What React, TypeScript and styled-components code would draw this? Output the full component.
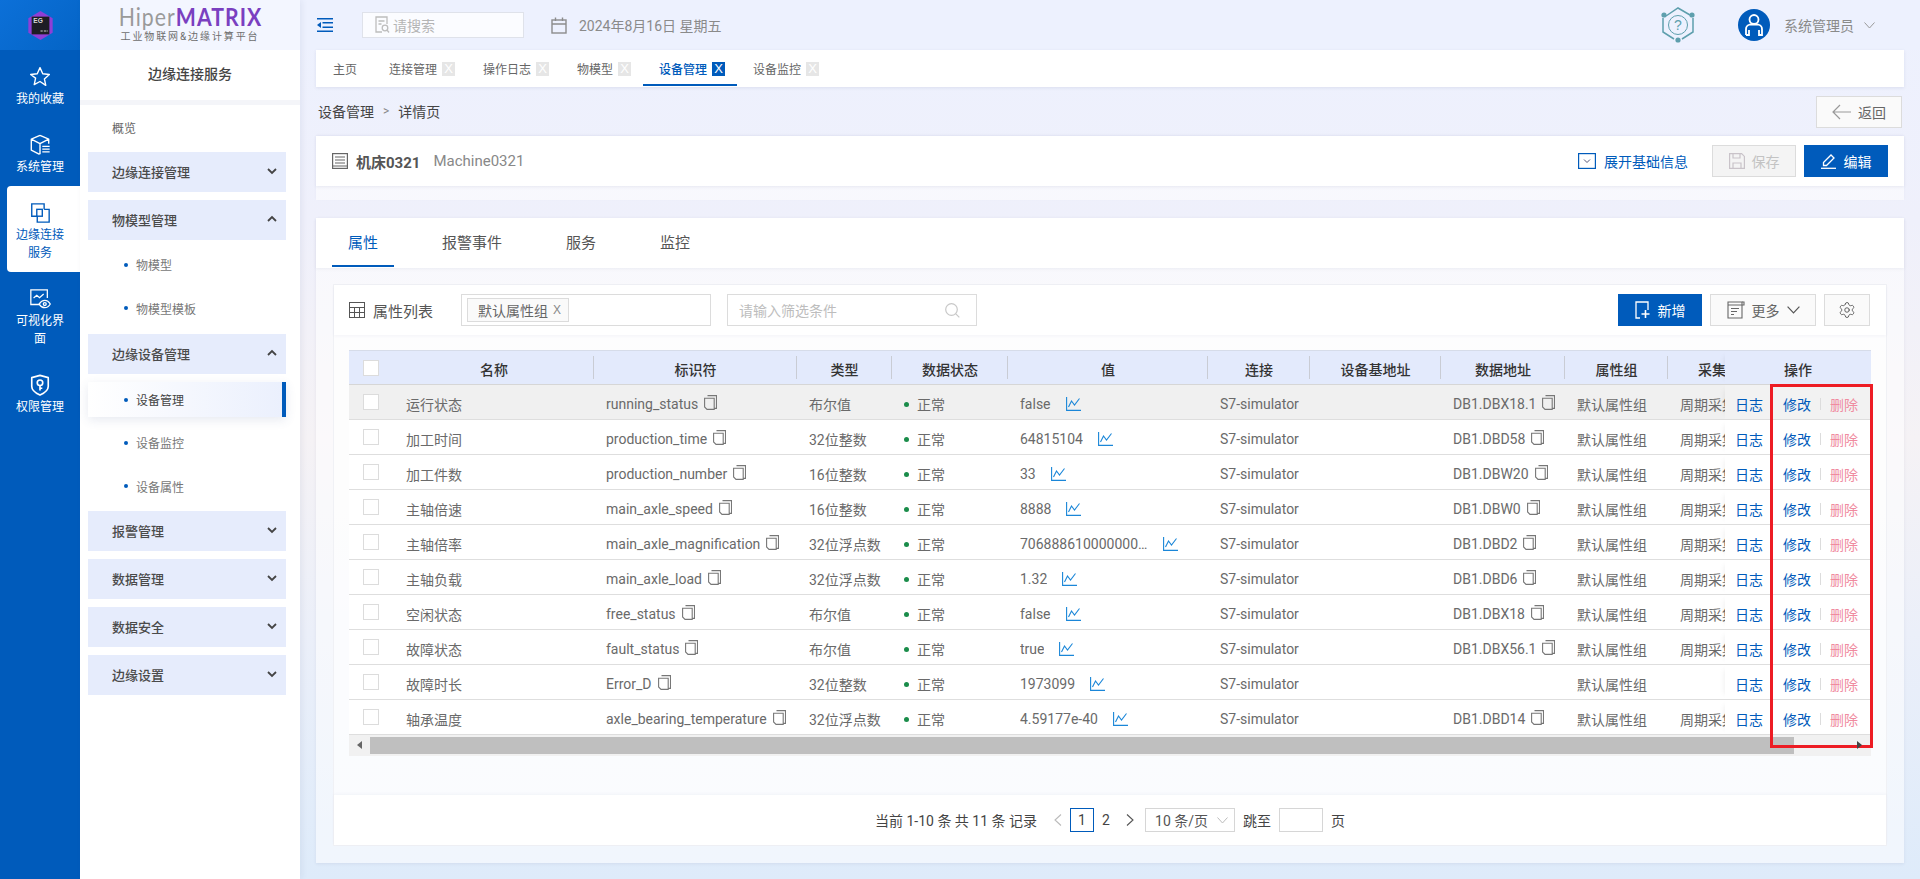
import React from "react";
import styled, { createGlobalStyle } from "styled-components";
import { Settings } from "lucide-react";

const Global = createGlobalStyle`
  * { box-sizing: border-box; }
  html, body { margin: 0; padding: 0; height: 100%; }
  body { font-family: Roboto, "Noto Sans CJK SC", sans-serif; font-size: 14px; color: #666; overflow: hidden; }
`;

const BLUE = "#005bbb";

const Page = styled.div`
  display: flex; width: 1920px; height: 879px; overflow: hidden;
  background: linear-gradient(180deg, #edf1fe 0%, #eff0fb 25%, #f5f2f5 50%, #ebeff9 72%, #deebfa 100%);
`;

/* rail */
const Rail = styled.nav`
  width: 80px; flex: none; background: ${BLUE}; display: flex; flex-direction: column;
`;
const RailLogo = styled.div`
  height: 50px; display: flex; align-items: center; justify-content: center;
  background: linear-gradient(135deg, #0c70d8, #0464c6);
`;
const RailItem = styled.div<{ $active?: boolean }>`
  margin-left: ${p => (p.$active ? "7px" : "0")};
  padding: 16px ${p => (p.$active ? "16px" : "15px")} 10px ${p => (p.$active ? "9px" : "15px")};
  min-height: 68px;
  display: flex; flex-direction: column; align-items: center;
  font-size: 12px; line-height: 18px; text-align: center;
  color: ${p => (p.$active ? BLUE : "#fff")};
  background: ${p => (p.$active ? "#fff" : "transparent")};
  border-radius: ${p => (p.$active ? "4px 0 0 4px" : "0")};
  svg { height: 22px; width: 24px; margin-bottom: 2px; flex: none; }
`;

/* sidebar */
const Side = styled.aside`
  width: 220px; flex: none; background: #fff; display: flex; flex-direction: column;
  box-shadow: 2px 0 6px rgba(60, 80, 120, .08); position: relative; z-index: 1;
`;
const Brand = styled.div`
  height: 50px; background: #f3f6ff; display: flex; flex-direction: column; align-items: center; padding-top: 3px;
`;
const BrandName = styled.div`
  font-family: "Lato", sans-serif; font-size: 25px; line-height: 27px; letter-spacing: 1.2px; color: #9a9a9a; white-space: nowrap;
  transform: scaleX(.85);
  b { font-weight: 700; color: #7a3fc0; }
`;
const BrandSub = styled.div`
  font-size: 10px; line-height: 14px; letter-spacing: 1.9px; color: #6e6e6e; white-space: nowrap;
`;
const SideTitle = styled.div`
  height: 55px; padding-bottom: 5px; border-bottom: 5px solid #f4f5f9; display: flex; align-items: center; justify-content: center;
  font-size: 14px; font-weight: 500; color: #444;
`;
const Overview = styled.div`
  height: 47px; padding: 0 0 3px 32px; display: flex; align-items: center; font-size: 12px; color: #666;
`;
const SideList = styled.div`
  padding: 0 14px 0 8px; display: flex; flex-direction: column;
`;
const Group = styled.div`
  height: 40px; background: #e6ecfc; margin-bottom: 8px; padding: 0 9px 2px 24px;
  display: flex; align-items: center; justify-content: space-between;
  font-size: 13px; font-weight: 500; color: #4a4a4a;
  svg { flex: none; }
`;
const SubList = styled.div<{ $top: number; $bottom: number }>`
  margin: ${p => p.$top}px 0 ${p => p.$bottom}px; display: flex; flex-direction: column;
`;
const SubItem = styled.div<{ $active?: boolean }>`
  height: ${p => (p.$active ? "35px" : "43.5px")};
  margin-bottom: ${p => (p.$active ? "4px" : "0")};
  display: flex; align-items: center; gap: 8px; padding-left: 36px;
  font-size: 12px; color: ${p => (p.$active ? "#444" : "#777")};
  position: relative;
  background: ${p => (p.$active ? "linear-gradient(90deg, #fff, #ebf0fd)" : "transparent")};
  border-right: ${p => (p.$active ? `4px solid ${BLUE}` : "0")};
  box-shadow: ${p => (p.$active ? "0 3px 10px rgba(60, 80, 140, .12)" : "none")};
  &::before { content: ""; width: 4px; height: 4px; border-radius: 50%; background: ${BLUE}; }
`;

/* main */
const Main = styled.main`
  flex: 1; min-width: 0; padding: 0 16px; display: flex; flex-direction: column;
`;
const TopBar = styled.header`
  height: 50px; display: flex; align-items: center; margin: 0 -16px; padding: 0 45px 0 17px; background: #edf1fe;
`;
const SearchBox = styled.div`
  width: 162px; height: 26px; margin-left: 29px; border: 1px solid #dfe2ea; background: #fbfcff;
  display: flex; align-items: center; gap: 3px; padding-left: 12px; font-size: 14px; color: #b5b5b5;
`;
const DateText = styled.div`
  margin-left: 27px; display: flex; align-items: center; gap: 12px; font-size: 14px; color: #8a8a8a;
`;
const TopRight = styled.div`
  margin-left: auto; display: flex; align-items: center;
`;
const UserName = styled.span`
  margin: 0 10px 0 14px; font-size: 14px; color: #8a8a8a;
`;
const TabsBar = styled.div`
  height: 37px; background: #fff; display: flex; box-shadow: 0 1px 3px rgba(80, 90, 130, .12); padding-left: 1px;
`;
const TabItem = styled.div<{ $active?: boolean; $closable?: boolean }>`
  height: 36px; padding: 3px ${p => (p.$closable ? "12px" : "16px")} 0 16px; display: flex; align-items: center; gap: 5px; font-size: 12px;
  color: ${p => (p.$active ? BLUE : "#666")}; font-weight: ${p => (p.$active ? 500 : 400)};
  border-bottom: 2px solid ${p => (p.$active ? BLUE : "transparent")};
`;
const TabClose = styled.span<{ $active?: boolean }>`
  width: 13px; height: 14px; display: flex; align-items: center; justify-content: center; font-size: 13px; line-height: 1;
  font-family: "Liberation Sans", sans-serif; font-weight: 400;
  background: ${p => (p.$active ? BLUE : "#e6e6e6")}; color: #fff;
`;
const CrumbRow = styled.div`
  height: 49px; display: flex; align-items: center; justify-content: space-between; padding: 0 2px; font-size: 14px; color: #444;
`;
const Crumb = styled.div`
  display: flex; gap: 9px; align-items: center; padding-bottom: 2px;
  i { font-style: normal; color: #888; font-size: 12px; }
`;
const BackButton = styled.div`
  width: 86px; height: 32px; border: 1px solid #dcdcdc; background: #fafafa; display: flex; align-items: center; justify-content: center; gap: 7px; font-size: 14px; color: #666;
`;
const DetailCard = styled.section`
  height: 64px; background: rgba(255, 255, 255, .55); margin-bottom: 18px; box-shadow: 0 -1px 2px rgba(80, 90, 130, .06);
`;
const DetailHead = styled.div`
  height: 50px; background: #fff; box-shadow: 0 1px 3px rgba(80, 90, 130, .1); display: flex; align-items: center; padding: 0 16px;
`;
const DetailName = styled.span`
  margin-left: 8px; font-size: 15px; font-weight: 700; color: #555;
`;
const DetailCode = styled.span`
  margin-left: 13px; font-size: 15px; color: #888;
`;
const Expand = styled.div`
  margin-left: auto; display: flex; align-items: center; gap: 8px; color: ${BLUE}; font-size: 14px; margin-right: 24px;
`;
const ActionButton = styled.div<{ $variant: "primary" | "disabled" | "ghost"; $width?: number }>`
  height: 32px; width: ${p => p.$width ?? 84}px;
  display: flex; align-items: center; justify-content: center; gap: 7px; font-size: 14px; font-weight: 400;
  background: ${p => (p.$variant === "primary" ? BLUE : p.$variant === "disabled" ? "#f4f4f4" : "#fafafa")};
  color: ${p => (p.$variant === "primary" ? "#fff" : p.$variant === "disabled" ? "#c3c3c3" : "#666")};
  border: ${p => (p.$variant === "primary" ? "0" : "1px solid #dcdcdc")};
  & + & { margin-left: 8px; }
`;
const OuterCard = styled.section`
  height: 645px; background: rgba(255, 255, 255, .55); padding-bottom: 17px; box-shadow: 0 1px 3px rgba(80, 90, 130, .1); display: flex; flex-direction: column;
`;
const OuterTabs = styled.div`
  height: 50px; flex: none; background: #fff; box-shadow: 0 1px 3px rgba(80, 90, 130, .08); display: flex; padding-left: 16px; gap: 32px; margin-bottom: 16px;
`;
const OuterTab = styled.div<{ $active?: boolean }>`
  height: 49px; padding: 0 16px; display: flex; align-items: center; font-size: 15px;
  color: ${p => (p.$active ? BLUE : "#555")};
  border-bottom: 2px solid ${p => (p.$active ? BLUE : "transparent")};
`;
const InnerCard = styled.div`
  flex: 1; margin: 0 17px; border: 1px solid #f0f1f5; background: rgba(255, 255, 255, .6); display: flex; flex-direction: column;
`;
const InnerHead = styled.div`
  height: 50px; flex: none; background: #fff; display: flex; align-items: center; padding: 0 16px 0 15px; box-shadow: 0 1px 3px rgba(80, 90, 130, .06);
`;
const InnerTitle = styled.span`
  margin-left: 8px; font-size: 15px; color: #555; width: 88px;
`;
const GroupSelect = styled.div`
  width: 250px; height: 32px; border: 1px solid #dcdcdc; display: flex; align-items: center; padding-left: 5px;
`;
const Tag = styled.div`
  height: 24px; padding: 0 7px 0 10px; border: 1px solid #dcdcdc; background: #fafafa; display: flex; align-items: center; gap: 5px; font-size: 14px; color: #666;
  span { font-family: "Liberation Sans", sans-serif; font-size: 12px; color: #888; }
`;
const FilterBox = styled.div`
  width: 250px; height: 32px; margin-left: 16px; border: 1px solid #dcdcdc; display: flex; align-items: center; justify-content: space-between; padding: 0 16px 0 11px; font-size: 14px; color: #bdbdbd;
`;
const HeadActions = styled.div`
  margin-left: auto; display: flex; align-items: center;
`;
const TableWrap = styled.div`
  margin: 15px 15px 0; position: relative; flex: none;
`;
const cols = "45px 200px 203px 95px 116px 200px 102px 131px 124px 103px 57px 146px";
const HeadRow = styled.div`
  display: grid; grid-template-columns: ${cols}; height: 35px; background: #e3eafc; border-top: 1px solid #d6dce9; border-bottom: 1px solid #d6d6d6;
`;
const HeadCell = styled.div<{ $sep?: boolean; $clip?: boolean }>`
  display: flex; align-items: center; justify-content: ${p => (p.$clip ? "flex-start" : "center")};
  padding: 2px 0 0 ${p => (p.$clip ? "30px" : "0")};
  overflow: hidden; white-space: nowrap; font-size: 14px; font-weight: 500; color: #333; position: relative;
  &::after { content: ${p => (p.$sep ? '""' : "none")}; position: absolute; right: 0; top: 5px; bottom: 5px; width: 1px; background: #c9ccd4; }
`;
const Row = styled.div<{ $hover?: boolean }>`
  display: grid; grid-template-columns: ${cols}; height: 35px; border-bottom: 1px solid #dedede;
  background: ${p => (p.$hover ? "#f0f0f0" : "#fff")};
`;
const Cell = styled.div`
  display: flex; align-items: center; gap: 6px; padding: 4px 0 0 12px; overflow: hidden; white-space: nowrap; font-size: 14px; color: #6a6a6a; font-weight: 400;
`;
const ValueText = styled.span`
  display: inline-block; max-width: 128px; overflow: hidden; text-overflow: ellipsis; margin-right: 9px;
`;
const Check = styled.span`
  width: 16px; height: 16px; border: 1px solid #dcdcdc; background: #fff; display: block; margin-left: 14px; flex: none;
`;
const CheckCell = styled.div`
  display: flex; align-items: center;
`;
const Dot = styled.span`
  width: 5px; height: 5px; border-radius: 50%; background: #1a8c4a; flex: none; margin-right: 2px;
`;
const OpCell = styled.div<{ $hover?: boolean }>`
  display: flex; align-items: center; padding: 4px 0 0 10px; font-size: 14px; background: ${p => (p.$hover ? "#f2f2f2" : "#fff")};
  box-shadow: -5px 0 6px -5px rgba(0, 0, 0, .08); position: relative; white-space: nowrap;
`;
const OpLink = styled.span<{ $danger?: boolean }>`
  color: ${p => (p.$danger ? "#f08ba0" : BLUE)};
`;
const OpSep = styled.i<{ $wide?: boolean }>`
  width: 1px; height: 12px; background: #dcdcdc; margin: 0 ${p => (p.$wide ? "10px" : "9px")} 0 9px;
`;
const OpHead = styled(HeadCell)`
  background: #e3eafc; box-shadow: -5px 0 6px -5px rgba(0, 0, 0, .08);
`;
const ScrollBar = styled.div`
  height: 21px; background: #f1f1f1; display: flex; align-items: center; position: relative;
`;
const ScrollThumb = styled.div`
  margin-left: 21px; width: 1424px; height: 17px; background: #bfbfbf;
`;
const ArrowLeft = styled.span`
  position: absolute; left: 8px; top: 6px; border: 4.5px solid transparent; border-left: 0; border-right: 5px solid #666;
`;
const ArrowRight = styled.span`
  position: absolute; right: 9px; top: 6px; border: 4.5px solid transparent; border-right: 0; border-left: 5px solid #444; z-index: 3;
`;
const RedMark = styled.div`
  position: absolute; right: -2px; top: 34px; width: 103px; height: 364px; border: 3px solid #ed1c24; pointer-events: none; z-index: 2;
`;
const Footer = styled.div`
  margin-top: auto; height: 50px; background: #fff; display: flex; align-items: center; justify-content: center; font-size: 14px; color: #444; box-shadow: 0 -1px 3px rgba(80, 90, 130, .05);
`;
const PageNum = styled.span<{ $active?: boolean }>`
  width: 24px; height: 24px; display: flex; align-items: center; justify-content: center;
  border: ${p => (p.$active ? `1px solid ${BLUE}` : "0")};
`;
const PageSelect = styled.div`
  width: 90px; height: 24px; border: 1px solid #d6d6d6; display: flex; align-items: center; justify-content: space-between; padding: 0 6px 0 9px; color: #555; margin: 0 8px 0 3px;
`;
const PageInput = styled.div`
  width: 44px; height: 24px; border: 1px solid #d6d6d6; margin: 0 8px;
`;
const PageNote = styled.span`
  margin-right: 9px; white-space: nowrap;
`;
const PageArrow = styled.span`
  width: 24px; display: flex; justify-content: center; align-items: center;
`;

/* icons */
const Line = { fill: "none", stroke: "currentColor" } as const;

const RailBadge = () => (
  <svg width="31" height="31" viewBox="0 0 28 28">
    <polygon points="14,1 25,7.5 25,20.5 14,27 3,20.5 3,7.5" fill="#8e3fd6" />
    <rect x="6" y="6" width="16" height="16" fill="#1d1d24" />
    <text x="7.500" y="12" fontSize="6" fontWeight="700" fill="#d8d8d8" fontFamily="Liberation Sans">EG</text>
    <path d="M14 19h2M17 19h2M19.500 19h1" stroke="#cfcfcf" strokeWidth="1" />
  </svg>
);
const StarIcon = () => (
  <svg viewBox="0 0 24 24" {...Line} strokeWidth="1.5" strokeLinejoin="round"><path d="M12 1.8l3 6.7 7.2.8-5.4 4.8 1.5 7.1L12 16.9 5.7 20.3l1.5-7.1L1.8 9.3 9 8.5z" /></svg>
);
const BoxIcon = () => (
  <svg viewBox="0 0 24 24" {...Line} strokeWidth="1.5" strokeLinejoin="round"><path d="M12 1.5l9.5 4.2v5M12 1.5L2.5 5.7v12l9 4.5M2.5 5.7l9.5 4.7 9.5-4.7M12 10.4v11.8" /><path d="M14.5 13.5h8M14.5 16.5h8M14.5 19.5h8" /></svg>
);
const LinkIcon = () => (
  <svg viewBox="0 0 24 24" {...Line} strokeWidth="1.5"><path d="M9 15.5H3V2h13.5v6" /><rect x="8.5" y="8" width="6" height="7.5" /><path d="M16.5 8H22v14H9v-6.5" /></svg>
);
const ScreenIcon = () => (
  <svg viewBox="0 0 24 24" {...Line} strokeWidth="1.4"><path d="M11 18H2V2h18v9" /><path d="M5 11l3.5-3 3 2.5L16 6.5" /><path d="M11 17.5c2-3 4-4 6.2-4s4.3 1 6 4c-1.700 3-3.800 4-6 4s-4.200-1-6.200-4z" /><circle cx="17.200" cy="17.500" r="1.600" /></svg>
);
const ShieldIcon = () => (
  <svg viewBox="0 0 24 24" {...Line} strokeWidth="1.800" strokeLinejoin="round"><path d="M12 1.500l9 2.500v9.500c0 3.500-4 7-9 9.500-5-2.500-9-6-9-9.500V4z" /><circle cx="12" cy="9.500" r="3" /><path d="M12 12.500v5.500M12 15.500h2.500" /></svg>
);
const Chevron = ({ up }: { up?: boolean }) => (
  <svg width="10" height="8" viewBox="0 0 10 8" fill="none" stroke="#444" strokeWidth="1.800"><path d={up ? "M1 6l4-4 4 4" : "M1 2l4 4 4-4"} /></svg>
);
const MenuToggle = () => (
  <svg width="16" height="14" viewBox="0 0 16 14" fill={BLUE}><rect x="0" y="0" width="16" height="1.500" /><rect x="0" y="12.500" width="16" height="1.500" /><rect x="5.500" y="4" width="10.500" height="1.500" /><rect x="5.500" y="8.500" width="10.500" height="1.500" /><path d="M0 7l4-3v6z" /></svg>
);
const DocSearch = () => (
  <svg width="15" height="18" viewBox="0 0 15 18" fill="none" stroke="#bdbdbd" strokeWidth="1.300"><path d="M7 16H1V1h11v7" /><path d="M3.500 5h6M3.500 8h3" /><circle cx="10" cy="12" r="2.800" /><path d="M12 14l2 2.500" /></svg>
);
const CalendarIcon = () => (
  <svg width="16" height="17" viewBox="0 0 16 17" fill="none" stroke="#8c8c8c" strokeWidth="1.400"><rect x="1" y="3" width="14" height="13" /><path d="M1 7h14M4.500 0.500V4M11.500 0.500V4" /></svg>
);
const HelpIcon = () => (
  <svg width="36" height="38" viewBox="0 0 36 38" fill="none" stroke="#5e9fad" strokeWidth="1.500">
    <path d="M6 10l12-8 12 7M33 12v14l-11 7M14 33L3 26V12" />
    <circle cx="18" cy="19" r="9.500" strokeWidth="1" />
    <circle cx="4" cy="9" r="2.600" fill="#5e9fad" stroke="none" />
    <circle cx="32" cy="9" r="2.600" fill="#5e9fad" stroke="none" />
    <circle cx="18" cy="34" r="2.600" fill="#5e9fad" stroke="none" />
    <text x="18" y="24" fontSize="14" textAnchor="middle" fill="#5e9fad" stroke="none" fontFamily="Liberation Sans">?</text>
  </svg>
);
const AvatarIcon = styled.svg`
  margin-left: 42px;
`;
const Avatar = () => (
  <AvatarIcon width="32" height="32" viewBox="0 0 32 32">
    <circle cx="16" cy="16" r="16" fill={BLUE} />
    <circle cx="16" cy="10.500" r="4.500" fill="none" stroke="#fff" strokeWidth="1.800" />
    <path d="M8 26v-6c0-3 2-4 4-4.500h8c2 .5 4 1.500 4 4.500v6h-3v-5M8 26h3v-5" fill="none" stroke="#fff" strokeWidth="1.800" />
  </AvatarIcon>
);
const ThinChevron = ({ color = "#999", w = 11 }: { color?: string; w?: number }) => (
  <svg width={w} height={w > 11 ? 8 : 7} viewBox="0 0 11 7" preserveAspectRatio="none" fill="none" stroke={color} strokeWidth="1"><path d="M.5 .5l5 5.500 5-5.500" /></svg>
);
const BackArrow = () => (
  <svg width="19" height="16" viewBox="0 0 19 16" fill="none" stroke="#999" strokeWidth="1.200"><path d="M8 1L1 8l7 7M1 8h18" /></svg>
);
const ListDoc = () => (
  <svg width="16" height="16" viewBox="0 0 16 16" fill="none" stroke="#666" strokeWidth="1.200"><rect x=".6" y=".6" width="14.800" height="14.800" /><path d="M3 4h10M3 7h10M3 10h10M.6 13h14.800" /></svg>
);
const ExpandIcon = () => (
  <svg width="18" height="16" viewBox="0 0 18 16" fill="none" stroke={BLUE} strokeWidth="1.200"><rect x=".6" y=".6" width="16.800" height="14.800" /><path d="M6 6.500l3 3 3-3" stroke="#557" strokeWidth="1" /></svg>
);
const SaveIcon = () => (
  <svg width="16" height="16" viewBox="0 0 16 16" fill="none" stroke="#c9c3c9" strokeWidth="1.200"><path d="M.6.6h12l2.800 2.800v12H.6z" /><path d="M4 .6v4.400h7V.6M4 15.400V10h8v5.400" /></svg>
);
const EditIcon = () => (
  <svg width="16" height="16" viewBox="0 0 16 16" fill="none" stroke="#fff" strokeWidth="1.300"><path d="M2.500 9.500L10 2l3 3-7.500 7.500H2.500z" /><path d="M0 15.300h15" /></svg>
);
const TableIcon = () => (
  <svg width="16" height="16" viewBox="0 0 16 16" fill="none" stroke="#555" strokeWidth="1"><rect x=".5" y=".5" width="15" height="15" /><path d="M.5 5.500h15M.5 10.500h15M5.500 5.500v10M10.500 5.500v10" /></svg>
);
const FilterSearch = () => (
  <svg width="15" height="15" viewBox="0 0 15 15" fill="none" stroke="#c8c8c8" strokeWidth="1.200"><circle cx="6.500" cy="6.500" r="5.800" /><path d="M10.800 10.800l3.500 3.500" /></svg>
);
const NewIcon = () => (
  <svg width="16" height="18" viewBox="0 0 16 18" fill="none" stroke="#fff" strokeWidth="1.300"><path d="M5 17H1V1h12v8" /><path d="M10.500 9v8M6.500 13h8" strokeWidth="1.600" /></svg>
);
const MoreIcon = () => (
  <svg width="18" height="18" viewBox="0 0 18 18" fill="none" stroke="#666" strokeWidth="1.100"><path d="M1 1h14v16H1zM1 4h14M4 7.500h8M4 10.500h6M4 13.500h3" /><path d="M15 1h2v3h-2" /></svg>
);
const CopyGlyph = styled.svg`
  flex: none; margin-top: -3px;
`;
const CopyIcon = () => (
  <CopyGlyph width="13" height="15" viewBox="0 0 13 15" fill="none" stroke="#777" strokeWidth="1.100"><path d="M3.500 .6h9v12.800h-2.500" /><path d="M.6 3.200h9.600v11.200H3L.6 12z" /></CopyGlyph>
);
const TrendIcon = () => (
  <svg width="15" height="14" viewBox="0 0 15 14" fill="none" stroke="#1a86d8" strokeWidth="1.100"><path d="M.6 0v13.400H15" /><path d="M2.500 10l3-6 3 4 5-6.500" /></svg>
);
const PagerArrow = ({ left, color }: { left?: boolean; color: string }) => (
  <svg width="8" height="12" viewBox="0 0 8 12" fill="none" stroke={color} strokeWidth="1.100"><path d={left ? "M7 .5L1 6l6 5.500" : "M1 .5L7 6l-6 5.500"} /></svg>
);

const rows = [
  ["运行状态", "running_status", "布尔值", "false", "DB1.DBX18.1", "周期采集"],
  ["加工时间", "production_time", "32位整数", "64815104", "DB1.DBD58", "周期采集"],
  ["加工件数", "production_number", "16位整数", "33", "DB1.DBW20", "周期采集"],
  ["主轴倍速", "main_axle_speed", "16位整数", "8888", "DB1.DBW0", "周期采集"],
  ["主轴倍率", "main_axle_magnification", "32位浮点数", "7068886100000000000", "DB1.DBD2", "周期采集"],
  ["主轴负载", "main_axle_load", "32位浮点数", "1.32", "DB1.DBD6", "周期采集"],
  ["空闲状态", "free_status", "布尔值", "false", "DB1.DBX18", "周期采集"],
  ["故障状态", "fault_status", "布尔值", "true", "DB1.DBX56.1", "周期采集"],
  ["故障时长", "Error_D", "32位整数", "1973099", "", ""],
  ["轴承温度", "axle_bearing_temperature", "32位浮点数", "4.59177e-40", "DB1.DBD14", "周期采集"],
];

const heads = ["名称", "标识符", "类型", "数据状态", "值", "连接", "设备基地址", "数据地址", "属性组"];

export default function App() {
  return (
    <Page>
      <Global />
      <Rail>
        <RailLogo><RailBadge /></RailLogo>
        <RailItem><StarIcon />我的收藏</RailItem>
        <RailItem><BoxIcon />系统管理</RailItem>
        <RailItem $active><LinkIcon />边缘连接服务</RailItem>
        <RailItem><ScreenIcon />可视化界面</RailItem>
        <RailItem><ShieldIcon />权限管理</RailItem>
      </Rail>
      <Side>
        <Brand>
          <BrandName>Hiper<b>MATRIX</b></BrandName>
          <BrandSub>工业物联网&amp;边缘计算平台</BrandSub>
        </Brand>
        <SideTitle>边缘连接服务</SideTitle>
        <Overview>概览</Overview>
        <SideList>
          <Group>边缘连接管理<Chevron /></Group>
          <Group>物模型管理<Chevron up /></Group>
          <SubList $top={-5} $bottom={4}>
            <SubItem>物模型</SubItem>
            <SubItem>物模型模板</SubItem>
          </SubList>
          <Group>边缘设备管理<Chevron up /></Group>
          <SubList $top={0} $bottom={3}>
            <SubItem $active>设备管理</SubItem>
            <SubItem>设备监控</SubItem>
            <SubItem>设备属性</SubItem>
          </SubList>
          <Group>报警管理<Chevron /></Group>
          <Group>数据管理<Chevron /></Group>
          <Group>数据安全<Chevron /></Group>
          <Group>边缘设置<Chevron /></Group>
        </SideList>
      </Side>
      <Main>
        <TopBar>
          <MenuToggle />
          <SearchBox><DocSearch />请搜索</SearchBox>
          <DateText><CalendarIcon />2024年8月16日 星期五</DateText>
          <TopRight>
            <HelpIcon />
            <Avatar />
            <UserName>系统管理员</UserName>
            <ThinChevron />
          </TopRight>
        </TopBar>
        <TabsBar>
          <TabItem>主页</TabItem>
          <TabItem $closable>连接管理<TabClose>X</TabClose></TabItem>
          <TabItem $closable>操作日志<TabClose>X</TabClose></TabItem>
          <TabItem $closable>物模型<TabClose>X</TabClose></TabItem>
          <TabItem $closable $active>设备管理<TabClose $active>X</TabClose></TabItem>
          <TabItem $closable>设备监控<TabClose>X</TabClose></TabItem>
        </TabsBar>
        <CrumbRow>
          <Crumb>设备管理<i>&gt;</i>详情页</Crumb>
          <BackButton><BackArrow />返回</BackButton>
        </CrumbRow>
        <DetailCard>
          <DetailHead>
            <ListDoc />
            <DetailName>机床0321</DetailName>
            <DetailCode>Machine0321</DetailCode>
            <Expand><ExpandIcon />展开基础信息</Expand>
            <ActionButton $variant="disabled"><SaveIcon />保存</ActionButton>
            <ActionButton $variant="primary"><EditIcon />编辑</ActionButton>
          </DetailHead>
        </DetailCard>
        <OuterCard>
          <OuterTabs>
            <OuterTab $active>属性</OuterTab>
            <OuterTab>报警事件</OuterTab>
            <OuterTab>服务</OuterTab>
            <OuterTab>监控</OuterTab>
          </OuterTabs>
          <InnerCard>
            <InnerHead>
              <TableIcon />
              <InnerTitle>属性列表</InnerTitle>
              <GroupSelect><Tag>默认属性组<span>X</span></Tag></GroupSelect>
              <FilterBox>请输入筛选条件<FilterSearch /></FilterBox>
              <HeadActions>
                <ActionButton $variant="primary"><NewIcon />新增</ActionButton>
                <ActionButton $variant="ghost" $width={106}><MoreIcon />更多<ThinChevron color="#555" w={13} /></ActionButton>
                <ActionButton $variant="ghost" $width={46}><Settings size={18} strokeWidth={1.2} color="#555" /></ActionButton>
              </HeadActions>
            </InnerHead>
            <TableWrap>
              <HeadRow>
                <CheckCell><Check /></CheckCell>
                {heads.map(h => <HeadCell key={h} $sep>{h}</HeadCell>)}
                <HeadCell $clip>采集</HeadCell>
                <OpHead>操作</OpHead>
              </HeadRow>
              {rows.map((r, i) => (
                <Row key={r[1]} $hover={i === 0}>
                  <CheckCell><Check /></CheckCell>
                  <Cell>{r[0]}</Cell>
                  <Cell>{r[1]}<CopyIcon /></Cell>
                  <Cell>{r[2]}</Cell>
                  <Cell><Dot />正常</Cell>
                  <Cell><ValueText>{r[3]}</ValueText><TrendIcon /></Cell>
                  <Cell>S7-simulator</Cell>
                  <Cell />
                  <Cell>{r[4]}{r[4] && <CopyIcon />}</Cell>
                  <Cell>默认属性组</Cell>
                  <Cell>{r[5]}</Cell>
                  <OpCell $hover={i === 0}>
                    <OpLink>日志</OpLink><OpSep $wide />
                    <OpLink>修改</OpLink><OpSep />
                    <OpLink $danger>删除</OpLink>
                  </OpCell>
                </Row>
              ))}
              <ScrollBar>
                <ArrowLeft />
                <ScrollThumb />
                <ArrowRight />
              </ScrollBar>
              <RedMark />
            </TableWrap>
            <Footer>
              <PageNote>当前 1-10 条 共 11 条 记录</PageNote>
              <PageArrow><PagerArrow left color="#bbb" /></PageArrow>
              <PageNum $active>1</PageNum>
              <PageNum>2</PageNum>
              <PageArrow><PagerArrow color="#555" /></PageArrow>
              <PageSelect>10 条/页<ThinChevron color="#bbb" /></PageSelect>
              跳至
              <PageInput />
              页
            </Footer>
          </InnerCard>
        </OuterCard>
      </Main>
    </Page>
  );
}
